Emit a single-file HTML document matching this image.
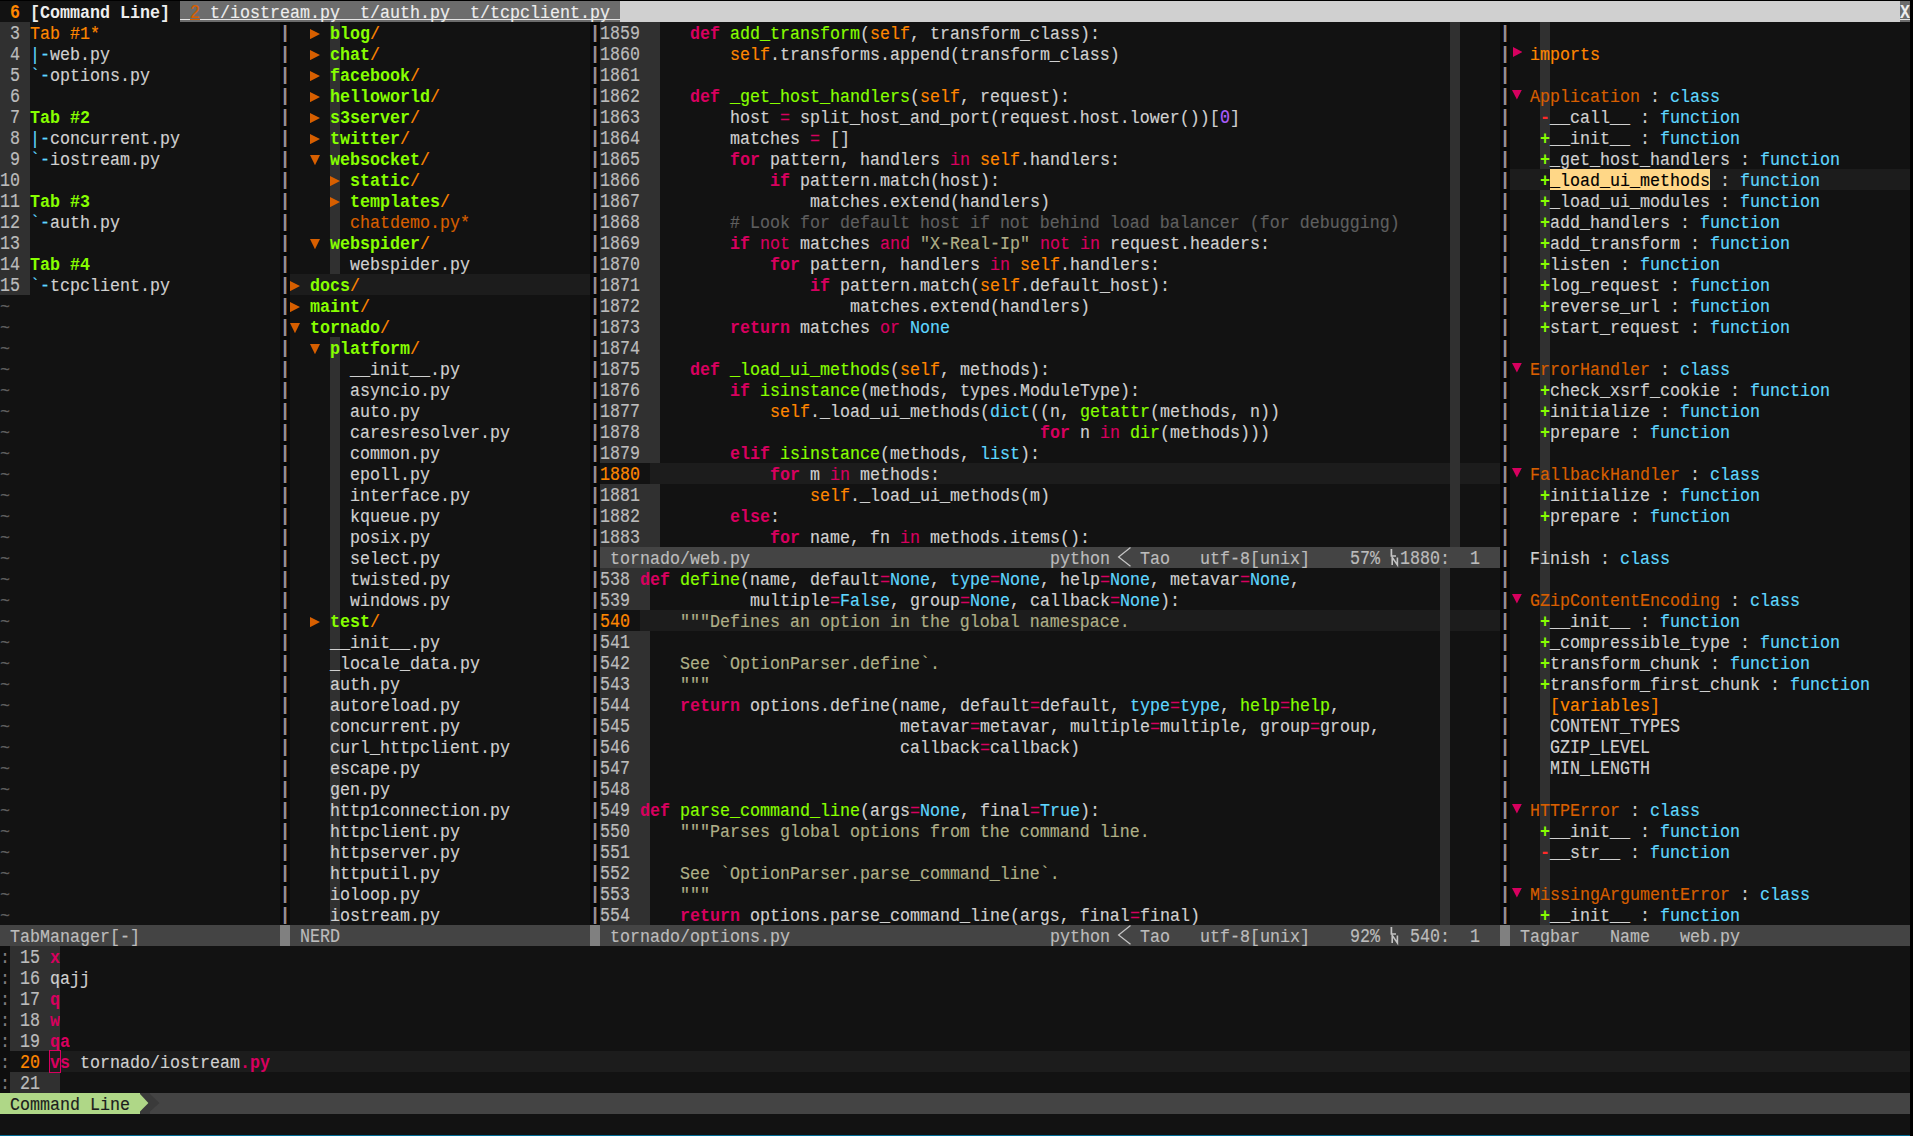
<!DOCTYPE html>
<html><head><meta charset="utf-8"><title>vim</title>
<style>
html,body{margin:0;padding:0;background:#000;}
body{width:1913px;height:1136px;position:relative;overflow:hidden;font-family:"Liberation Mono",monospace;font-size:16.667px;}
.b{position:absolute;}
.i{position:absolute;display:block;}
.row{position:absolute;left:0;width:1910px;height:21px;line-height:21px;transform:scaleY(1.13);transform-origin:0 14.93px;white-space:pre;}
.row span{position:absolute;top:0;}
.row .U{transform:scaleY(1.05);transform-origin:0 14.93px;}
.vs{position:absolute;width:10px;background:
 linear-gradient(to right,transparent 3px,#14245c 3px,#14245c 4px,#8e8e8e 4px,#8e8e8e 6px,#6a3410 6px,#6a3410 7px,transparent 7px) 0 3px/10px 17px no-repeat;height:21px;}
.n{color:#d0d0d0;-webkit-text-stroke:0.15px;}
.k{color:#d7005f;font-weight:bold;}
.p{color:#d7005f;-webkit-text-stroke:0.15px;}
.f{color:#87ff00;-webkit-text-stroke:0.15px;}
.o{color:#ff8700;-webkit-text-stroke:0.15px;}
.s{color:#afaf87;-webkit-text-stroke:0.15px;}
.c{color:#5f5f5f;-webkit-text-stroke:0.15px;}
.m{color:#af5fff;-webkit-text-stroke:0.15px;}
.t{color:#5fd7ff;-webkit-text-stroke:0.15px;}
.d{color:#87ff00;font-weight:bold;}
.a{color:#d75f00;-webkit-text-stroke:0.15px;}
.g{color:#bcbcbc;-webkit-text-stroke:0.15px;}
.r{color:#ff2a2a;-webkit-text-stroke:0.15px;}
.x{color:#000000;-webkit-text-stroke:0.15px;}
.w{color:#eeeeee;-webkit-text-stroke:0.15px;}
.S{color:#bcbcbc;-webkit-text-stroke:0.15px;}
.z{color:#5f5f5f;-webkit-text-stroke:0.15px;}
.h{color:#ff8700;font-weight:bold;}
.q{color:#808080;-webkit-text-stroke:0.15px;}
.G{color:#87ff00;font-weight:bold;}
.e{color:#1c1c1c;-webkit-text-stroke:0.15px;}
</style></head><body>
<div class="b" style="left:0px;top:1px;width:180px;height:21px;background:#121212"></div>
<div class="b" style="left:180px;top:1px;width:440px;height:21px;background:#6c6c6c"></div>
<div class="b" style="left:620px;top:1px;width:1280px;height:21px;background:#d0d0d0"></div>
<div class="b" style="left:1900px;top:1px;width:10px;height:21px;background:#6c6c6c"></div>
<div class="b" style="left:180px;top:19px;width:440px;height:1px;background:#e4e4e4"></div>
<div class="b" style="left:190px;top:19px;width:10px;height:1px;background:#d75f00"></div>
<div class="b" style="left:1900px;top:19px;width:10px;height:1px;background:#e4e4e4"></div>
<div class="b" style="left:0px;top:22px;width:1910px;height:1113px;background:#121212"></div>
<div class="b" style="left:0px;top:22px;width:30px;height:273px;background:#303030"></div>
<div class="b" style="left:290px;top:274px;width:300px;height:21px;background:#1c1c1c"></div>
<div class="b" style="left:330px;top:22px;width:10px;height:252px;background:#303030"></div>
<div class="b" style="left:330px;top:337px;width:10px;height:588px;background:#303030"></div>
<div class="b" style="left:280px;top:22px;width:10px;height:903px;background:#080808"></div>
<div class="b" style="left:590px;top:22px;width:10px;height:903px;background:#080808"></div>
<div class="b" style="left:1500px;top:22px;width:10px;height:903px;background:#080808"></div>
<div class="b" style="left:600px;top:22px;width:60px;height:525px;background:#303030"></div>
<div class="b" style="left:1450px;top:22px;width:10px;height:525px;background:#303030"></div>
<div class="b" style="left:600px;top:463px;width:50px;height:21px;background:#121212"></div>
<div class="b" style="left:650px;top:463px;width:850px;height:21px;background:#1c1c1c"></div>
<div class="b" style="left:1450px;top:463px;width:10px;height:21px;background:#303030"></div>
<div class="b" style="left:600px;top:547px;width:900px;height:21px;background:#444444"></div>
<div class="b" style="left:600px;top:568px;width:50px;height:357px;background:#303030"></div>
<div class="b" style="left:1440px;top:568px;width:10px;height:357px;background:#303030"></div>
<div class="b" style="left:600px;top:610px;width:40px;height:21px;background:#121212"></div>
<div class="b" style="left:640px;top:610px;width:860px;height:21px;background:#1c1c1c"></div>
<div class="b" style="left:1440px;top:610px;width:10px;height:21px;background:#303030"></div>
<div class="b" style="left:1540px;top:22px;width:10px;height:903px;background:#303030"></div>
<div class="b" style="left:1510px;top:169px;width:400px;height:21px;background:#1c1c1c"></div>
<div class="b" style="left:1550px;top:169px;width:160px;height:21px;background:#ffd787"></div>
<div class="b" style="left:0px;top:925px;width:1910px;height:21px;background:#444444"></div>
<div class="b" style="left:280px;top:925px;width:10px;height:21px;background:#808080"></div>
<div class="b" style="left:590px;top:925px;width:10px;height:21px;background:#808080"></div>
<div class="b" style="left:1500px;top:925px;width:10px;height:21px;background:#808080"></div>
<div class="b" style="left:0px;top:946px;width:10px;height:147px;background:#0e0e0e"></div>
<div class="b" style="left:10px;top:946px;width:50px;height:147px;background:#303030"></div>
<div class="b" style="left:10px;top:1051px;width:40px;height:21px;background:#121212"></div>
<div class="b" style="left:50px;top:1051px;width:1860px;height:21px;background:#1c1c1c"></div>
<div class="b" style="left:0px;top:1093px;width:1910px;height:21px;background:#444444"></div>
<div class="b" style="left:0px;top:1093px;width:140px;height:21px;background:#afd787"></div>
<div class="b" style="left:140px;top:1093px;width:10px;height:21px;background:#3a3a3a"></div>
<div class="b" style="left:0px;top:1135px;width:1910px;height:1px;background:#006a94"></div>
<div class="vs" style="left:280px;top:22px"></div><div class="vs" style="left:280px;top:43px"></div><div class="vs" style="left:280px;top:64px"></div><div class="vs" style="left:280px;top:85px"></div><div class="vs" style="left:280px;top:106px"></div><div class="vs" style="left:280px;top:127px"></div><div class="vs" style="left:280px;top:148px"></div><div class="vs" style="left:280px;top:169px"></div><div class="vs" style="left:280px;top:190px"></div><div class="vs" style="left:280px;top:211px"></div><div class="vs" style="left:280px;top:232px"></div><div class="vs" style="left:280px;top:253px"></div><div class="vs" style="left:280px;top:274px"></div><div class="vs" style="left:280px;top:295px"></div><div class="vs" style="left:280px;top:316px"></div><div class="vs" style="left:280px;top:337px"></div><div class="vs" style="left:280px;top:358px"></div><div class="vs" style="left:280px;top:379px"></div><div class="vs" style="left:280px;top:400px"></div><div class="vs" style="left:280px;top:421px"></div><div class="vs" style="left:280px;top:442px"></div><div class="vs" style="left:280px;top:463px"></div><div class="vs" style="left:280px;top:484px"></div><div class="vs" style="left:280px;top:505px"></div><div class="vs" style="left:280px;top:526px"></div><div class="vs" style="left:280px;top:547px"></div><div class="vs" style="left:280px;top:568px"></div><div class="vs" style="left:280px;top:589px"></div><div class="vs" style="left:280px;top:610px"></div><div class="vs" style="left:280px;top:631px"></div><div class="vs" style="left:280px;top:652px"></div><div class="vs" style="left:280px;top:673px"></div><div class="vs" style="left:280px;top:694px"></div><div class="vs" style="left:280px;top:715px"></div><div class="vs" style="left:280px;top:736px"></div><div class="vs" style="left:280px;top:757px"></div><div class="vs" style="left:280px;top:778px"></div><div class="vs" style="left:280px;top:799px"></div><div class="vs" style="left:280px;top:820px"></div><div class="vs" style="left:280px;top:841px"></div><div class="vs" style="left:280px;top:862px"></div><div class="vs" style="left:280px;top:883px"></div><div class="vs" style="left:280px;top:904px"></div>
<div class="vs" style="left:590px;top:22px"></div><div class="vs" style="left:590px;top:43px"></div><div class="vs" style="left:590px;top:64px"></div><div class="vs" style="left:590px;top:85px"></div><div class="vs" style="left:590px;top:106px"></div><div class="vs" style="left:590px;top:127px"></div><div class="vs" style="left:590px;top:148px"></div><div class="vs" style="left:590px;top:169px"></div><div class="vs" style="left:590px;top:190px"></div><div class="vs" style="left:590px;top:211px"></div><div class="vs" style="left:590px;top:232px"></div><div class="vs" style="left:590px;top:253px"></div><div class="vs" style="left:590px;top:274px"></div><div class="vs" style="left:590px;top:295px"></div><div class="vs" style="left:590px;top:316px"></div><div class="vs" style="left:590px;top:337px"></div><div class="vs" style="left:590px;top:358px"></div><div class="vs" style="left:590px;top:379px"></div><div class="vs" style="left:590px;top:400px"></div><div class="vs" style="left:590px;top:421px"></div><div class="vs" style="left:590px;top:442px"></div><div class="vs" style="left:590px;top:463px"></div><div class="vs" style="left:590px;top:484px"></div><div class="vs" style="left:590px;top:505px"></div><div class="vs" style="left:590px;top:526px"></div><div class="vs" style="left:590px;top:547px"></div><div class="vs" style="left:590px;top:568px"></div><div class="vs" style="left:590px;top:589px"></div><div class="vs" style="left:590px;top:610px"></div><div class="vs" style="left:590px;top:631px"></div><div class="vs" style="left:590px;top:652px"></div><div class="vs" style="left:590px;top:673px"></div><div class="vs" style="left:590px;top:694px"></div><div class="vs" style="left:590px;top:715px"></div><div class="vs" style="left:590px;top:736px"></div><div class="vs" style="left:590px;top:757px"></div><div class="vs" style="left:590px;top:778px"></div><div class="vs" style="left:590px;top:799px"></div><div class="vs" style="left:590px;top:820px"></div><div class="vs" style="left:590px;top:841px"></div><div class="vs" style="left:590px;top:862px"></div><div class="vs" style="left:590px;top:883px"></div><div class="vs" style="left:590px;top:904px"></div>
<div class="vs" style="left:1500px;top:22px"></div><div class="vs" style="left:1500px;top:43px"></div><div class="vs" style="left:1500px;top:64px"></div><div class="vs" style="left:1500px;top:85px"></div><div class="vs" style="left:1500px;top:106px"></div><div class="vs" style="left:1500px;top:127px"></div><div class="vs" style="left:1500px;top:148px"></div><div class="vs" style="left:1500px;top:169px"></div><div class="vs" style="left:1500px;top:190px"></div><div class="vs" style="left:1500px;top:211px"></div><div class="vs" style="left:1500px;top:232px"></div><div class="vs" style="left:1500px;top:253px"></div><div class="vs" style="left:1500px;top:274px"></div><div class="vs" style="left:1500px;top:295px"></div><div class="vs" style="left:1500px;top:316px"></div><div class="vs" style="left:1500px;top:337px"></div><div class="vs" style="left:1500px;top:358px"></div><div class="vs" style="left:1500px;top:379px"></div><div class="vs" style="left:1500px;top:400px"></div><div class="vs" style="left:1500px;top:421px"></div><div class="vs" style="left:1500px;top:442px"></div><div class="vs" style="left:1500px;top:463px"></div><div class="vs" style="left:1500px;top:484px"></div><div class="vs" style="left:1500px;top:505px"></div><div class="vs" style="left:1500px;top:526px"></div><div class="vs" style="left:1500px;top:547px"></div><div class="vs" style="left:1500px;top:568px"></div><div class="vs" style="left:1500px;top:589px"></div><div class="vs" style="left:1500px;top:610px"></div><div class="vs" style="left:1500px;top:631px"></div><div class="vs" style="left:1500px;top:652px"></div><div class="vs" style="left:1500px;top:673px"></div><div class="vs" style="left:1500px;top:694px"></div><div class="vs" style="left:1500px;top:715px"></div><div class="vs" style="left:1500px;top:736px"></div><div class="vs" style="left:1500px;top:757px"></div><div class="vs" style="left:1500px;top:778px"></div><div class="vs" style="left:1500px;top:799px"></div><div class="vs" style="left:1500px;top:820px"></div><div class="vs" style="left:1500px;top:841px"></div><div class="vs" style="left:1500px;top:862px"></div><div class="vs" style="left:1500px;top:883px"></div><div class="vs" style="left:1500px;top:904px"></div>
<div class="row" style="top:3.0px"><span class="h U" style="left:10px">6</span><span class="w" style="left:30px;font-weight:bold;-webkit-text-stroke:0">[Command Line]</span><span class="a U" style="left:190px">2</span><span class="w" style="left:210px">t/iostream.py</span><span class="w" style="left:360px">t/auth.py</span><span class="w" style="left:470px">t/tcpclient.py</span><span class="w U" style="left:1900px;font-weight:bold;-webkit-text-stroke:0">X</span></div>
<div class="row" style="top:24.0px"><span class="g U" style="left:10px">3</span><span class="o" style="left:30px">Tab #1*</span><span class="d" style="left:330px">blog</span><span class="o" style="left:370px">/</span><span class="g U" style="left:600px">1859</span><span class="k" style="left:690px">def</span><span class="f" style="left:730px">add_transform</span><span class="n" style="left:860px">(</span><span class="o" style="left:870px">self</span><span class="n" style="left:910px">, transform_class):</span></div>
<div class="row" style="top:45.0px"><span class="g U" style="left:10px">4</span><span class="t" style="left:30px">|-</span><span class="n" style="left:50px">web.py</span><span class="d" style="left:330px">chat</span><span class="o" style="left:370px">/</span><span class="g U" style="left:600px">1860</span><span class="o" style="left:730px">self</span><span class="n" style="left:770px">.transforms.append(transform_class)</span><span class="o" style="left:1530px">imports</span></div>
<div class="row" style="top:66.0px"><span class="g U" style="left:10px">5</span><span class="t" style="left:30px">`-</span><span class="n" style="left:50px">options.py</span><span class="d" style="left:330px">facebook</span><span class="o" style="left:410px">/</span><span class="g U" style="left:600px">1861</span></div>
<div class="row" style="top:87.0px"><span class="g U" style="left:10px">6</span><span class="d" style="left:330px">helloworld</span><span class="o" style="left:430px">/</span><span class="g U" style="left:600px">1862</span><span class="k" style="left:690px">def</span><span class="f" style="left:730px">_get_host_handlers</span><span class="n" style="left:910px">(</span><span class="o" style="left:920px">self</span><span class="n" style="left:960px">, request):</span><span class="a" style="left:1530px">Application</span><span class="n" style="left:1650px">:</span><span class="t" style="left:1670px">class</span></div>
<div class="row" style="top:108.0px"><span class="g U" style="left:10px">7</span><span class="G" style="left:30px">Tab #2</span><span class="d" style="left:330px">s3server</span><span class="o" style="left:410px">/</span><span class="g U" style="left:600px">1863</span><span class="n" style="left:730px">host</span><span class="p" style="left:780px">=</span><span class="n" style="left:800px">split_host_and_port(request.host.lower())[</span><span class="m U" style="left:1220px">0</span><span class="n" style="left:1230px">]</span><span class="r" style="left:1540px;font-weight:bold;-webkit-text-stroke:0">-</span><span class="n" style="left:1550px">__call__</span><span class="n" style="left:1640px">:</span><span class="t" style="left:1660px">function</span></div>
<div class="row" style="top:129.0px"><span class="g U" style="left:10px">8</span><span class="t" style="left:30px">|-</span><span class="n" style="left:50px">concurrent.py</span><span class="d" style="left:330px">twitter</span><span class="o" style="left:400px">/</span><span class="g U" style="left:600px">1864</span><span class="n" style="left:730px">matches</span><span class="p" style="left:810px">=</span><span class="n" style="left:830px">[]</span><span class="f" style="left:1540px;font-weight:bold;-webkit-text-stroke:0">+</span><span class="n" style="left:1550px">__init__</span><span class="n" style="left:1640px">:</span><span class="t" style="left:1660px">function</span></div>
<div class="row" style="top:150.0px"><span class="g U" style="left:10px">9</span><span class="t" style="left:30px">`-</span><span class="n" style="left:50px">iostream.py</span><span class="d" style="left:330px">websocket</span><span class="o" style="left:420px">/</span><span class="g U" style="left:600px">1865</span><span class="k" style="left:730px">for</span><span class="n" style="left:770px">pattern, handlers</span><span class="p" style="left:950px">in</span><span class="o" style="left:980px">self</span><span class="n" style="left:1020px">.handlers:</span><span class="f" style="left:1540px;font-weight:bold;-webkit-text-stroke:0">+</span><span class="n" style="left:1550px">_get_host_handlers</span><span class="n" style="left:1740px">:</span><span class="t" style="left:1760px">function</span></div>
<div class="row" style="top:171.0px"><span class="g U" style="left:0px">10</span><span class="d" style="left:350px">static</span><span class="o" style="left:410px">/</span><span class="g U" style="left:600px">1866</span><span class="k" style="left:770px">if</span><span class="n" style="left:800px">pattern.match(host):</span><span class="f" style="left:1540px;font-weight:bold;-webkit-text-stroke:0">+</span><span class="x" style="left:1550px">_load_ui_methods</span><span class="n" style="left:1720px">:</span><span class="t" style="left:1740px">function</span></div>
<div class="row" style="top:192.0px"><span class="g U" style="left:0px">11</span><span class="G" style="left:30px">Tab #3</span><span class="d" style="left:350px">templates</span><span class="o" style="left:440px">/</span><span class="g U" style="left:600px">1867</span><span class="n" style="left:810px">matches.extend(handlers)</span><span class="f" style="left:1540px;font-weight:bold;-webkit-text-stroke:0">+</span><span class="n" style="left:1550px">_load_ui_modules</span><span class="n" style="left:1720px">:</span><span class="t" style="left:1740px">function</span></div>
<div class="row" style="top:213.0px"><span class="g U" style="left:0px">12</span><span class="t" style="left:30px">`-</span><span class="n" style="left:50px">auth.py</span><span class="a" style="left:350px">chatdemo.py*</span><span class="g U" style="left:600px">1868</span><span class="c" style="left:730px"># Look for default host if not behind load balancer (for debugging)</span><span class="f" style="left:1540px;font-weight:bold;-webkit-text-stroke:0">+</span><span class="n" style="left:1550px">add_handlers</span><span class="n" style="left:1680px">:</span><span class="t" style="left:1700px">function</span></div>
<div class="row" style="top:234.0px"><span class="g U" style="left:0px">13</span><span class="d" style="left:330px">webspider</span><span class="o" style="left:420px">/</span><span class="g U" style="left:600px">1869</span><span class="k" style="left:730px">if</span><span class="p" style="left:760px">not</span><span class="n" style="left:800px">matches</span><span class="p" style="left:880px">and</span><span class="s" style="left:920px">&quot;X-Real-Ip&quot;</span><span class="p" style="left:1040px">not</span><span class="p" style="left:1080px">in</span><span class="n" style="left:1110px">request.headers:</span><span class="f" style="left:1540px;font-weight:bold;-webkit-text-stroke:0">+</span><span class="n" style="left:1550px">add_transform</span><span class="n" style="left:1690px">:</span><span class="t" style="left:1710px">function</span></div>
<div class="row" style="top:255.0px"><span class="g U" style="left:0px">14</span><span class="G" style="left:30px">Tab #4</span><span class="n" style="left:350px">webspider.py</span><span class="g U" style="left:600px">1870</span><span class="k" style="left:770px">for</span><span class="n" style="left:810px">pattern, handlers</span><span class="p" style="left:990px">in</span><span class="o" style="left:1020px">self</span><span class="n" style="left:1060px">.handlers:</span><span class="f" style="left:1540px;font-weight:bold;-webkit-text-stroke:0">+</span><span class="n" style="left:1550px">listen</span><span class="n" style="left:1620px">:</span><span class="t" style="left:1640px">function</span></div>
<div class="row" style="top:276.0px"><span class="g U" style="left:0px">15</span><span class="t" style="left:30px">`-</span><span class="n" style="left:50px">tcpclient.py</span><span class="d" style="left:310px">docs</span><span class="o" style="left:350px">/</span><span class="g U" style="left:600px">1871</span><span class="k" style="left:810px">if</span><span class="n" style="left:840px">pattern.match(</span><span class="o" style="left:980px">self</span><span class="n" style="left:1020px">.default_host):</span><span class="f" style="left:1540px;font-weight:bold;-webkit-text-stroke:0">+</span><span class="n" style="left:1550px">log_request</span><span class="n" style="left:1670px">:</span><span class="t" style="left:1690px">function</span></div>
<div class="row" style="top:297.0px"><span class="z" style="left:0px">~</span><span class="d" style="left:310px">maint</span><span class="o" style="left:360px">/</span><span class="g U" style="left:600px">1872</span><span class="n" style="left:850px">matches.extend(handlers)</span><span class="f" style="left:1540px;font-weight:bold;-webkit-text-stroke:0">+</span><span class="n" style="left:1550px">reverse_url</span><span class="n" style="left:1670px">:</span><span class="t" style="left:1690px">function</span></div>
<div class="row" style="top:318.0px"><span class="z" style="left:0px">~</span><span class="d" style="left:310px">tornado</span><span class="o" style="left:380px">/</span><span class="g U" style="left:600px">1873</span><span class="k" style="left:730px">return</span><span class="n" style="left:800px">matches</span><span class="p" style="left:880px">or</span><span class="t" style="left:910px">None</span><span class="f" style="left:1540px;font-weight:bold;-webkit-text-stroke:0">+</span><span class="n" style="left:1550px">start_request</span><span class="n" style="left:1690px">:</span><span class="t" style="left:1710px">function</span></div>
<div class="row" style="top:339.0px"><span class="z" style="left:0px">~</span><span class="d" style="left:330px">platform</span><span class="o" style="left:410px">/</span><span class="g U" style="left:600px">1874</span></div>
<div class="row" style="top:360.0px"><span class="z" style="left:0px">~</span><span class="n" style="left:350px">__init__.py</span><span class="g U" style="left:600px">1875</span><span class="k" style="left:690px">def</span><span class="f" style="left:730px">_load_ui_methods</span><span class="n" style="left:890px">(</span><span class="o" style="left:900px">self</span><span class="n" style="left:940px">, methods):</span><span class="a" style="left:1530px">ErrorHandler</span><span class="n" style="left:1660px">:</span><span class="t" style="left:1680px">class</span></div>
<div class="row" style="top:381.0px"><span class="z" style="left:0px">~</span><span class="n" style="left:350px">asyncio.py</span><span class="g U" style="left:600px">1876</span><span class="k" style="left:730px">if</span><span class="f" style="left:760px">isinstance</span><span class="n" style="left:860px">(methods, types.ModuleType):</span><span class="f" style="left:1540px;font-weight:bold;-webkit-text-stroke:0">+</span><span class="n" style="left:1550px">check_xsrf_cookie</span><span class="n" style="left:1730px">:</span><span class="t" style="left:1750px">function</span></div>
<div class="row" style="top:402.0px"><span class="z" style="left:0px">~</span><span class="n" style="left:350px">auto.py</span><span class="g U" style="left:600px">1877</span><span class="o" style="left:770px">self</span><span class="n" style="left:810px">._load_ui_methods(</span><span class="t" style="left:990px">dict</span><span class="n" style="left:1030px">((n,</span><span class="f" style="left:1080px">getattr</span><span class="n" style="left:1150px">(methods, n))</span><span class="f" style="left:1540px;font-weight:bold;-webkit-text-stroke:0">+</span><span class="n" style="left:1550px">initialize</span><span class="n" style="left:1660px">:</span><span class="t" style="left:1680px">function</span></div>
<div class="row" style="top:423.0px"><span class="z" style="left:0px">~</span><span class="n" style="left:350px">caresresolver.py</span><span class="g U" style="left:600px">1878</span><span class="k" style="left:1040px">for</span><span class="n" style="left:1080px">n</span><span class="p" style="left:1100px">in</span><span class="f" style="left:1130px">dir</span><span class="n" style="left:1160px">(methods)))</span><span class="f" style="left:1540px;font-weight:bold;-webkit-text-stroke:0">+</span><span class="n" style="left:1550px">prepare</span><span class="n" style="left:1630px">:</span><span class="t" style="left:1650px">function</span></div>
<div class="row" style="top:444.0px"><span class="z" style="left:0px">~</span><span class="n" style="left:350px">common.py</span><span class="g U" style="left:600px">1879</span><span class="k" style="left:730px">elif</span><span class="f" style="left:780px">isinstance</span><span class="n" style="left:880px">(methods,</span><span class="t" style="left:980px">list</span><span class="n" style="left:1020px">):</span></div>
<div class="row" style="top:465.0px"><span class="z" style="left:0px">~</span><span class="n" style="left:350px">epoll.py</span><span class="o U" style="left:600px">1880</span><span class="k" style="left:770px">for</span><span class="n" style="left:810px">m</span><span class="p" style="left:830px">in</span><span class="n" style="left:860px">methods:</span><span class="a" style="left:1530px">FallbackHandler</span><span class="n" style="left:1690px">:</span><span class="t" style="left:1710px">class</span></div>
<div class="row" style="top:486.0px"><span class="z" style="left:0px">~</span><span class="n" style="left:350px">interface.py</span><span class="g U" style="left:600px">1881</span><span class="o" style="left:810px">self</span><span class="n" style="left:850px">._load_ui_methods(m)</span><span class="f" style="left:1540px;font-weight:bold;-webkit-text-stroke:0">+</span><span class="n" style="left:1550px">initialize</span><span class="n" style="left:1660px">:</span><span class="t" style="left:1680px">function</span></div>
<div class="row" style="top:507.0px"><span class="z" style="left:0px">~</span><span class="n" style="left:350px">kqueue.py</span><span class="g U" style="left:600px">1882</span><span class="k" style="left:730px">else</span><span class="n" style="left:770px">:</span><span class="f" style="left:1540px;font-weight:bold;-webkit-text-stroke:0">+</span><span class="n" style="left:1550px">prepare</span><span class="n" style="left:1630px">:</span><span class="t" style="left:1650px">function</span></div>
<div class="row" style="top:528.0px"><span class="z" style="left:0px">~</span><span class="n" style="left:350px">posix.py</span><span class="g U" style="left:600px">1883</span><span class="k" style="left:770px">for</span><span class="n" style="left:810px">name, fn</span><span class="p" style="left:900px">in</span><span class="n" style="left:930px">methods.items():</span></div>
<div class="row" style="top:549.0px"><span class="z" style="left:0px">~</span><span class="n" style="left:350px">select.py</span><span class="S" style="left:610px">tornado/web.py</span><span class="S" style="left:1050px">python</span><span class="S" style="left:1140px">Tao</span><span class="S" style="left:1200px">utf-8[unix]</span><span class="S U" style="left:1350px">57%</span><span class="S U" style="left:1400px">1880</span><span class="S" style="left:1440px">:</span><span class="S U" style="left:1470px">1</span><span class="n" style="left:1530px">Finish</span><span class="n" style="left:1600px">:</span><span class="t" style="left:1620px">class</span></div>
<div class="row" style="top:570.0px"><span class="z" style="left:0px">~</span><span class="n" style="left:350px">twisted.py</span><span class="g U" style="left:600px">538</span><span class="k" style="left:640px">def</span><span class="f" style="left:680px">define</span><span class="n" style="left:740px">(name, default</span><span class="p" style="left:880px">=</span><span class="t" style="left:890px">None</span><span class="n" style="left:930px">,</span><span class="t" style="left:950px">type</span><span class="p" style="left:990px">=</span><span class="t" style="left:1000px">None</span><span class="n" style="left:1040px">, help</span><span class="p" style="left:1100px">=</span><span class="t" style="left:1110px">None</span><span class="n" style="left:1150px">, metavar</span><span class="p" style="left:1240px">=</span><span class="t" style="left:1250px">None</span><span class="n" style="left:1290px">,</span></div>
<div class="row" style="top:591.0px"><span class="z" style="left:0px">~</span><span class="n" style="left:350px">windows.py</span><span class="g U" style="left:600px">539</span><span class="n" style="left:750px">multiple</span><span class="p" style="left:830px">=</span><span class="t" style="left:840px">False</span><span class="n" style="left:890px">, group</span><span class="p" style="left:960px">=</span><span class="t" style="left:970px">None</span><span class="n" style="left:1010px">, callback</span><span class="p" style="left:1110px">=</span><span class="t" style="left:1120px">None</span><span class="n" style="left:1160px">):</span><span class="a" style="left:1530px">GZipContentEncoding</span><span class="n" style="left:1730px">:</span><span class="t" style="left:1750px">class</span></div>
<div class="row" style="top:612.0px"><span class="z" style="left:0px">~</span><span class="d" style="left:330px">test</span><span class="o" style="left:370px">/</span><span class="o U" style="left:600px">540</span><span class="s" style="left:680px">&quot;&quot;&quot;Defines an option in the global namespace.</span><span class="f" style="left:1540px;font-weight:bold;-webkit-text-stroke:0">+</span><span class="n" style="left:1550px">__init__</span><span class="n" style="left:1640px">:</span><span class="t" style="left:1660px">function</span></div>
<div class="row" style="top:633.0px"><span class="z" style="left:0px">~</span><span class="n" style="left:330px">__init__.py</span><span class="g U" style="left:600px">541</span><span class="f" style="left:1540px;font-weight:bold;-webkit-text-stroke:0">+</span><span class="n" style="left:1550px">_compressible_type</span><span class="n" style="left:1740px">:</span><span class="t" style="left:1760px">function</span></div>
<div class="row" style="top:654.0px"><span class="z" style="left:0px">~</span><span class="n" style="left:330px">_locale_data.py</span><span class="g U" style="left:600px">542</span><span class="s" style="left:680px">See `OptionParser.define`.</span><span class="f" style="left:1540px;font-weight:bold;-webkit-text-stroke:0">+</span><span class="n" style="left:1550px">transform_chunk</span><span class="n" style="left:1710px">:</span><span class="t" style="left:1730px">function</span></div>
<div class="row" style="top:675.0px"><span class="z" style="left:0px">~</span><span class="n" style="left:330px">auth.py</span><span class="g U" style="left:600px">543</span><span class="s" style="left:680px">&quot;&quot;&quot;</span><span class="f" style="left:1540px;font-weight:bold;-webkit-text-stroke:0">+</span><span class="n" style="left:1550px">transform_first_chunk</span><span class="n" style="left:1770px">:</span><span class="t" style="left:1790px">function</span></div>
<div class="row" style="top:696.0px"><span class="z" style="left:0px">~</span><span class="n" style="left:330px">autoreload.py</span><span class="g U" style="left:600px">544</span><span class="k" style="left:680px">return</span><span class="n" style="left:750px">options.define(name, default</span><span class="p" style="left:1030px">=</span><span class="n" style="left:1040px">default,</span><span class="t" style="left:1130px">type</span><span class="p" style="left:1170px">=</span><span class="t" style="left:1180px">type</span><span class="n" style="left:1220px">,</span><span class="f" style="left:1240px">help</span><span class="p" style="left:1280px">=</span><span class="f" style="left:1290px">help</span><span class="n" style="left:1330px">,</span><span class="o" style="left:1550px">[variables]</span></div>
<div class="row" style="top:717.0px"><span class="z" style="left:0px">~</span><span class="n" style="left:330px">concurrent.py</span><span class="g U" style="left:600px">545</span><span class="n" style="left:900px">metavar</span><span class="p" style="left:970px">=</span><span class="n" style="left:980px">metavar, multiple</span><span class="p" style="left:1150px">=</span><span class="n" style="left:1160px">multiple, group</span><span class="p" style="left:1310px">=</span><span class="n" style="left:1320px">group,</span><span class="n U" style="left:1550px">CONTENT_TYPES</span></div>
<div class="row" style="top:738.0px"><span class="z" style="left:0px">~</span><span class="n" style="left:330px">curl_httpclient.py</span><span class="g U" style="left:600px">546</span><span class="n" style="left:900px">callback</span><span class="p" style="left:980px">=</span><span class="n" style="left:990px">callback)</span><span class="n U" style="left:1550px">GZIP_LEVEL</span></div>
<div class="row" style="top:759.0px"><span class="z" style="left:0px">~</span><span class="n" style="left:330px">escape.py</span><span class="g U" style="left:600px">547</span><span class="n U" style="left:1550px">MIN_LENGTH</span></div>
<div class="row" style="top:780.0px"><span class="z" style="left:0px">~</span><span class="n" style="left:330px">gen.py</span><span class="g U" style="left:600px">548</span></div>
<div class="row" style="top:801.0px"><span class="z" style="left:0px">~</span><span class="n" style="left:330px">http1connection.py</span><span class="g U" style="left:600px">549</span><span class="k" style="left:640px">def</span><span class="f" style="left:680px">parse_command_line</span><span class="n" style="left:860px">(args</span><span class="p" style="left:910px">=</span><span class="t" style="left:920px">None</span><span class="n" style="left:960px">, final</span><span class="p" style="left:1030px">=</span><span class="t" style="left:1040px">True</span><span class="n" style="left:1080px">):</span><span class="a" style="left:1530px">HTTPError</span><span class="n" style="left:1630px">:</span><span class="t" style="left:1650px">class</span></div>
<div class="row" style="top:822.0px"><span class="z" style="left:0px">~</span><span class="n" style="left:330px">httpclient.py</span><span class="g U" style="left:600px">550</span><span class="s" style="left:680px">&quot;&quot;&quot;Parses global options from the command line.</span><span class="f" style="left:1540px;font-weight:bold;-webkit-text-stroke:0">+</span><span class="n" style="left:1550px">__init__</span><span class="n" style="left:1640px">:</span><span class="t" style="left:1660px">function</span></div>
<div class="row" style="top:843.0px"><span class="z" style="left:0px">~</span><span class="n" style="left:330px">httpserver.py</span><span class="g U" style="left:600px">551</span><span class="r" style="left:1540px;font-weight:bold;-webkit-text-stroke:0">-</span><span class="n" style="left:1550px">__str__</span><span class="n" style="left:1630px">:</span><span class="t" style="left:1650px">function</span></div>
<div class="row" style="top:864.0px"><span class="z" style="left:0px">~</span><span class="n" style="left:330px">httputil.py</span><span class="g U" style="left:600px">552</span><span class="s" style="left:680px">See `OptionParser.parse_command_line`.</span></div>
<div class="row" style="top:885.0px"><span class="z" style="left:0px">~</span><span class="n" style="left:330px">ioloop.py</span><span class="g U" style="left:600px">553</span><span class="s" style="left:680px">&quot;&quot;&quot;</span><span class="a" style="left:1530px">MissingArgumentError</span><span class="n" style="left:1740px">:</span><span class="t" style="left:1760px">class</span></div>
<div class="row" style="top:906.0px"><span class="z" style="left:0px">~</span><span class="n" style="left:330px">iostream.py</span><span class="g U" style="left:600px">554</span><span class="k" style="left:680px">return</span><span class="n" style="left:750px">options.parse_command_line(args, final</span><span class="p" style="left:1130px">=</span><span class="n" style="left:1140px">final)</span><span class="f" style="left:1540px;font-weight:bold;-webkit-text-stroke:0">+</span><span class="n" style="left:1550px">__init__</span><span class="n" style="left:1640px">:</span><span class="t" style="left:1660px">function</span></div>
<div class="row" style="top:927.0px"><span class="S" style="left:10px">TabManager[-]</span><span class="S U" style="left:300px">NERD</span><span class="S" style="left:610px">tornado/options.py</span><span class="S" style="left:1050px">python</span><span class="S" style="left:1140px">Tao</span><span class="S" style="left:1200px">utf-8[unix]</span><span class="S U" style="left:1350px">92%</span><span class="S U" style="left:1410px">540</span><span class="S" style="left:1440px">:</span><span class="S U" style="left:1470px">1</span><span class="S" style="left:1520px">Tagbar</span><span class="S" style="left:1610px">Name</span><span class="S" style="left:1680px">web.py</span></div>
<div class="row" style="top:948.0px"><span class="q" style="left:0px">:</span><span class="g U" style="left:20px">15</span><span class="k" style="left:50px">x</span></div>
<div class="row" style="top:969.0px"><span class="q" style="left:0px">:</span><span class="g U" style="left:20px">16</span><span class="n" style="left:50px">qajj</span></div>
<div class="row" style="top:990.0px"><span class="q" style="left:0px">:</span><span class="g U" style="left:20px">17</span><span class="k" style="left:50px">q</span></div>
<div class="row" style="top:1011.0px"><span class="q" style="left:0px">:</span><span class="g U" style="left:20px">18</span><span class="k" style="left:50px">w</span></div>
<div class="row" style="top:1032.0px"><span class="q" style="left:0px">:</span><span class="g U" style="left:20px">19</span><span class="k" style="left:50px">qa</span></div>
<div class="row" style="top:1053.0px"><span class="q" style="left:0px">:</span><span class="o U" style="left:20px">20</span><span class="k" style="left:50px">vs</span><span class="n" style="left:80px">tornado/iostream</span><span class="k" style="left:240px">.py</span></div>
<div class="row" style="top:1074.0px"><span class="q" style="left:0px">:</span><span class="g U" style="left:20px">21</span></div>
<div class="row" style="top:1095.0px"><span class="e" style="left:10px">Command Line</span></div>
<svg class="i" style="left:310px;top:28.8px" width="10" height="10.2"><polygon points="0,0 10,5.1 0,10.2" fill="#d75f00"/></svg>
<svg class="i" style="left:310px;top:49.8px" width="10" height="10.2"><polygon points="0,0 10,5.1 0,10.2" fill="#d75f00"/></svg>
<svg class="i" style="left:310px;top:70.8px" width="10" height="10.2"><polygon points="0,0 10,5.1 0,10.2" fill="#d75f00"/></svg>
<svg class="i" style="left:310px;top:91.8px" width="10" height="10.2"><polygon points="0,0 10,5.1 0,10.2" fill="#d75f00"/></svg>
<svg class="i" style="left:310px;top:112.8px" width="10" height="10.2"><polygon points="0,0 10,5.1 0,10.2" fill="#d75f00"/></svg>
<svg class="i" style="left:310px;top:133.8px" width="10" height="10.2"><polygon points="0,0 10,5.1 0,10.2" fill="#d75f00"/></svg>
<svg class="i" style="left:310px;top:154.6px" width="10" height="10.2"><polygon points="0,0 10,0 5.0,10.2" fill="#d75f00"/></svg>
<svg class="i" style="left:330px;top:175.8px" width="10" height="10.2"><polygon points="0,0 10,5.1 0,10.2" fill="#d75f00"/></svg>
<svg class="i" style="left:330px;top:196.8px" width="10" height="10.2"><polygon points="0,0 10,5.1 0,10.2" fill="#d75f00"/></svg>
<svg class="i" style="left:310px;top:238.6px" width="10" height="10.2"><polygon points="0,0 10,0 5.0,10.2" fill="#d75f00"/></svg>
<svg class="i" style="left:290px;top:280.8px" width="10" height="10.2"><polygon points="0,0 10,5.1 0,10.2" fill="#d75f00"/></svg>
<svg class="i" style="left:290px;top:301.8px" width="10" height="10.2"><polygon points="0,0 10,5.1 0,10.2" fill="#d75f00"/></svg>
<svg class="i" style="left:290px;top:322.6px" width="10" height="10.2"><polygon points="0,0 10,0 5.0,10.2" fill="#d75f00"/></svg>
<svg class="i" style="left:310px;top:343.6px" width="10" height="10.2"><polygon points="0,0 10,0 5.0,10.2" fill="#d75f00"/></svg>
<svg class="i" style="left:310px;top:616.8px" width="10" height="10.2"><polygon points="0,0 10,5.1 0,10.2" fill="#d75f00"/></svg>
<svg class="i" style="left:1117px;top:547px" width="16" height="21"><polyline points="13.5,0.5 1.6,10 13.5,19.3" fill="none" stroke="#c4c4c4" stroke-width="1.25"/></svg>
<svg class="i" style="left:1390px;top:547px" width="10" height="21"><path d="M1.4,2 V9 H6" fill="none" stroke="#c4c4c4" stroke-width="1.7"/><path d="M2.2,18 V10.4 L7.4,18 V10.4" fill="none" stroke="#c4c4c4" stroke-width="1.6"/></svg>
<svg class="i" style="left:1512.8px;top:47.1px" width="9.3" height="10"><polygon points="0,0 9.3,5.0 0,10" fill="#d7005f"/></svg>
<svg class="i" style="left:1511.8px;top:90px" width="9.8" height="9.6"><polygon points="0,0 9.8,0 4.9,9.6" fill="#d7005f"/></svg>
<svg class="i" style="left:1511.8px;top:363px" width="9.8" height="9.6"><polygon points="0,0 9.8,0 4.9,9.6" fill="#d7005f"/></svg>
<svg class="i" style="left:1511.8px;top:468px" width="9.8" height="9.6"><polygon points="0,0 9.8,0 4.9,9.6" fill="#d7005f"/></svg>
<svg class="i" style="left:1511.8px;top:594px" width="9.8" height="9.6"><polygon points="0,0 9.8,0 4.9,9.6" fill="#d7005f"/></svg>
<svg class="i" style="left:1511.8px;top:804px" width="9.8" height="9.6"><polygon points="0,0 9.8,0 4.9,9.6" fill="#d7005f"/></svg>
<svg class="i" style="left:1511.8px;top:888px" width="9.8" height="9.6"><polygon points="0,0 9.8,0 4.9,9.6" fill="#d7005f"/></svg>
<svg class="i" style="left:1117px;top:925px" width="16" height="21"><polyline points="13.5,0.5 1.6,10 13.5,19.3" fill="none" stroke="#c4c4c4" stroke-width="1.25"/></svg>
<svg class="i" style="left:1390px;top:925px" width="10" height="21"><path d="M1.4,2 V9 H6" fill="none" stroke="#c4c4c4" stroke-width="1.7"/><path d="M2.2,18 V10.4 L7.4,18 V10.4" fill="none" stroke="#c4c4c4" stroke-width="1.6"/></svg>
<div class="i" style="left:49px;top:1050px;width:12px;height:23px;border:1px solid #d7005f;box-sizing:border-box"></div>
<svg class="i" style="left:140px;top:1093px" width="10" height="21"><polygon points="0,1 8.4,10 0,18.6" fill="#afd787"/></svg>
<svg class="i" style="left:150px;top:1093px" width="10" height="21"><polygon points="0,1 9.5,10 0,18.6" fill="#3a3a3a"/></svg>
</body></html>
